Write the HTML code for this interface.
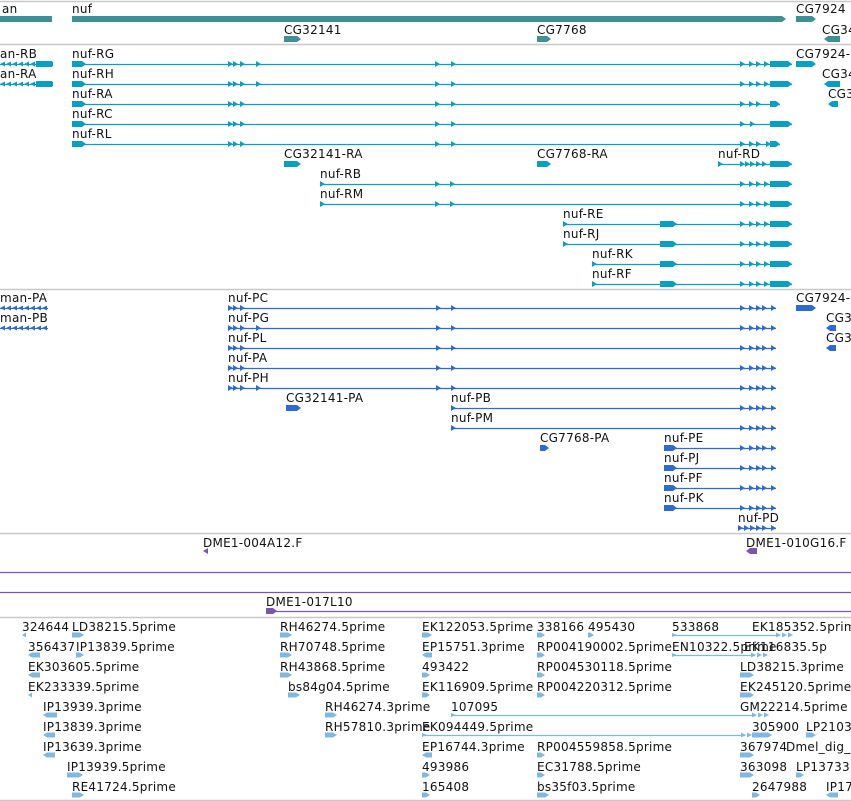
<!DOCTYPE html>
<html><head><meta charset="utf-8">
<style>
html,body{margin:0;padding:0;background:#fff;width:851px;height:801px;overflow:hidden}
svg text{font-family:"DejaVu Sans","Liberation Sans",sans-serif;font-size:12px;letter-spacing:0.25px;fill:#111}
</style></head>
<body>
<svg id="s" width="851" height="801" xmlns="http://www.w3.org/2000/svg"></svg>
<script>
var s=document.getElementById('s'),o='';
function L(x1,x2,y,c,w){o+='<line x1="'+x1+'" y1="'+y+'" x2="'+x2+'" y2="'+y+'" stroke="'+c+'" stroke-width="'+(w||1)+'"/>';}
function T(x,y,t){o+='<text x="'+x+'" y="'+y+'">'+t+'</text>';}
function R(x,y,w,h,c){o+='<rect x="'+x+'" y="'+y+'" width="'+w+'" height="'+h+'" fill="'+c+'"/>';}
function A(x,y,c,d,h){h=h||3;d=d||1;o+='<polygon points="'+x+','+(y-h)+' '+(x+5*d)+','+y+' '+x+','+(y+h)+'" fill="'+c+'"/>';}
function B(x1,x2,y,c,d,h){h=h||3;d=d||1;if(d>0){R(x1,y-h,x2-x1-4,2*h,c);o+='<polygon points="'+(x2-4)+','+(y-h)+' '+x2+','+y+' '+(x2-4)+','+(y+h)+'" fill="'+c+'"/>';}else{R(x1+4,y-h,x2-x1-4,2*h,c);o+='<polygon points="'+(x1+4)+','+(y-h)+' '+x1+','+y+' '+(x1+4)+','+(y+h)+'" fill="'+c+'"/>';}}
var G='#c8c8c8';
[1,44,289,533,617,800].forEach(function(y){L(0,851,y+0.5,G,1.5);});
L(0,851,572.5,'#7a55b0',1.3);L(0,851,592.5,'#7a55b0',1.3);
var g1='#3f8f96';
T(2,13,'an');R(0,16,52,6,g1);
T(72,13,'nuf');B(72,786,19,g1,1);
T(796,13,'CG7924');B(796,816,19,g1,1);
T(284,34,'CG32141');B(284,301,39,g1,1);
T(537,34,'CG7768');B(537,551,39,g1,1);
T(822,34,'CG34');B(824,840,39,g1,-1);
var c='#07a0c3';
function arrL(x1,x2,y,col){for(var x=x1;x<x2;x+=6){A(x+5,y,col,-1,2.5);}L(x1,x2,y+0.5,col,1);}
T(0,58,'an-RB');arrL(0,52,64,c);R(36,61,16,6,c);
T(0,78,'an-RA');arrL(0,52,84,c);R(36,81,16,6,c);
function tx(lx,lab,x1,x2,y,ex,col){T(lx,y-6,lab);L(x1,x2,y+0.5,col,1.2);ex.forEach(function(e){if(e[0]=='a')A(e[1],y,col);else B(e[1],e[2],y,col,1);});}
var mid=[['a',228],['a',233],['a',240],['a',256],['a',435],['a',451]];
var end1=[['a',740],['a',749],['a',756],['a',764],['b',770,792]];
tx(72,'nuf-RG',72,792,64,[['b',72,86]].concat(mid,end1),c);
T(796,58,'CG7924-R');B(796,816,64,c,1);
tx(72,'nuf-RH',72,792,84,[['b',72,86]].concat(mid,end1),c);
T(822,78,'CG34');B(824,840,84,c,-1);
tx(72,'nuf-RA',72,780,104,[['b',72,86],['a',228],['a',233],['a',240],['a',435],['a',451],['a',740],['a',749],['a',756],['b',770,780]],c);
T(828,98,'CG3');B(828,838,104,c,-1);
tx(72,'nuf-RC',72,792,124,[['b',72,86],['a',228],['a',233],['a',240],['a',435],['a',451],['a',740],['a',750],['b',770,792]],c);
tx(72,'nuf-RL',72,780,144,[['b',72,86],['a',228],['a',233],['a',240],['a',435],['a',451],['a',740],['a',749],['a',756],['a',766],['b',770,780]],c);
T(284,158,'CG32141-RA');B(284,301,164,c,1);
T(537,158,'CG7768-RA');B(537,551,164,c,1);
tx(718,'nuf-RD',718,792,164,[['a',718],['a',740],['a',745],['a',750],['a',756],['a',762],['b',770,792]],c);
var e2=[['a',740],['a',749],['a',756],['a',764],['b',770,792]];
tx(320,'nuf-RB',320,792,184,[['a',320],['a',435],['a',450]].concat(e2),c);
tx(320,'nuf-RM',320,792,204,[['a',320],['a',435],['a',450]].concat(e2),c);
tx(563,'nuf-RE',563,792,224,[['a',563],['b',660,677]].concat(e2),c);
tx(563,'nuf-RJ',563,792,244,[['a',563],['b',660,677]].concat(e2),c);
tx(592,'nuf-RK',592,792,264,[['a',592],['b',660,677]].concat(e2),c);
tx(592,'nuf-RF',592,792,284,[['a',592],['b',660,677]].concat(e2),c);
var p='#2d6bd2';
T(0,302,'man-PA');arrL(0,48,308,p);
T(0,322,'man-PB');arrL(0,48,328,p);
var pm=[['a',228],['a',233],['a',240],['a',436],['a',451]];
var pe=[['a',740],['a',749],['a',756],['a',762],['a',771]];
tx(228,'nuf-PC',228,776,308,pm.concat(pe),p);
T(796,302,'CG7924-P');B(796,816,308,p,1);
tx(228,'nuf-PG',228,776,328,pm.concat([['a',256]],pe),p);
T(826,322,'CG3');B(826,836,328,p,-1);
tx(228,'nuf-PL',228,776,348,pm.concat(pe),p);
T(826,342,'CG3');B(826,836,348,p,-1);
tx(228,'nuf-PA',228,776,368,pm.concat(pe),p);
tx(228,'nuf-PH',228,776,388,pm.concat([['a',256]],pe),p);
T(286,402,'CG32141-PA');B(286,301,408,p,1);
tx(451,'nuf-PB',451,776,408,[['a',451]].concat(pe),p);
tx(451,'nuf-PM',451,776,428,[['a',451]].concat(pe),p);
T(540,442,'CG7768-PA');B(540,549,448,p,1);
tx(664,'nuf-PE',664,776,448,[['b',664,677]].concat(pe),p);
tx(664,'nuf-PJ',664,776,468,[['b',664,677]].concat(pe),p);
tx(664,'nuf-PF',664,776,488,[['b',664,677]].concat(pe),p);
tx(664,'nuf-PK',664,776,508,[['b',664,677]].concat(pe),p);
tx(738,'nuf-PD',738,776,528,[['a',738],['a',744],['a',750],['a',756],['a',762],['a',771]],p);
var v='#7a55b0';
T(203,547,'DME1-004A12.F');A(208,551,v,-1,3);
T(746,547,'DME1-010G16.F');B(746,757,551,v,-1);
T(266,606,'DME1-017L10');L(266,851,611.5,v,1.2);B(266,277,611,v,1);
var e='#80b8e0';
var rows=[
[[22,'324644',-1,4],[72,'LD38215.5prime',1,12],[280,'RH46274.5prime',1,12],[422,'EK122053.5prime',1,10],[537,'338166',1,8],[588,'495430',1,6],[672,'533868',1,'L780'],[752,'EK185352.5prime',1,0]],
[[28,'356437',-1,12],[76,'IP13839.5prime',1,8],[280,'RH70748.5prime',1,12],[422,'EP15751.3prime',-1,10],[537,'RP004190002.5prime',1,8],[672,'EN10322.5prime',1,'L755'],[744,'EK116835.5p',1,0]],
[[28,'EK303605.5prime',-1,12],[280,'RH43868.5prime',1,12],[422,'493422',1,8],[537,'RP004530118.5prime',1,8],[740,'LD38215.3prime',1,14]],
[[28,'EK233339.5prime',-1,4],[288,'bs84g04.5prime',1,12],[422,'EK116909.5prime',1,8],[537,'RP004220312.5prime',1,8],[740,'EK245120.5prime',1,14]],
[[43,'IP13939.3prime',-1,14],[325,'RH46274.3prime',1,12],[451,'107095',1,'L756'],[740,'GM22214.5prime',1,0]],
[[43,'IP13839.3prime',-1,12],[325,'RH57810.3prime',1,12],[422,'EK094449.5prime',1,'L745'],[752,'305900',1,20],[806,'LP2103',1,10]],
[[43,'IP13639.3prime',-1,12],[422,'EP16744.3prime',-1,10],[537,'RP004559858.5prime',1,8],[740,'367974',1,14],[786,'Dmel_dig_(',1,0]],
[[67,'IP13939.5prime',1,16],[422,'493986',1,8],[537,'EC31788.5prime',1,8],[740,'363098',1,14],[796,'LP13733.',1,8]],
[[72,'RE41724.5prime',1,12],[422,'165408',1,8],[537,'bs35f03.5prime',1,12],[752,'2647988',1,8],[826,'IP17',-1,12]]
];
rows.forEach(function(r,i){var by=631+i*20,fy=635+i*20;r.forEach(function(f){T(f[0],by,f[1]);
 if(typeof f[3]=='string'){var x2=+f[3].slice(1);L(f[0],x2,fy+0.5,e,1.2);A(f[0],fy,e,1,2);A(x2-4,fy,e,1,2.5);A(x2+2,fy,e,1,2.5);A(x2+8,fy,e,1,2.5);}
 else if(f[3]>0){B(f[0],f[0]+f[3],fy,e,f[2],2.5);}});});
s.innerHTML=o;
</script>
</body></html>
